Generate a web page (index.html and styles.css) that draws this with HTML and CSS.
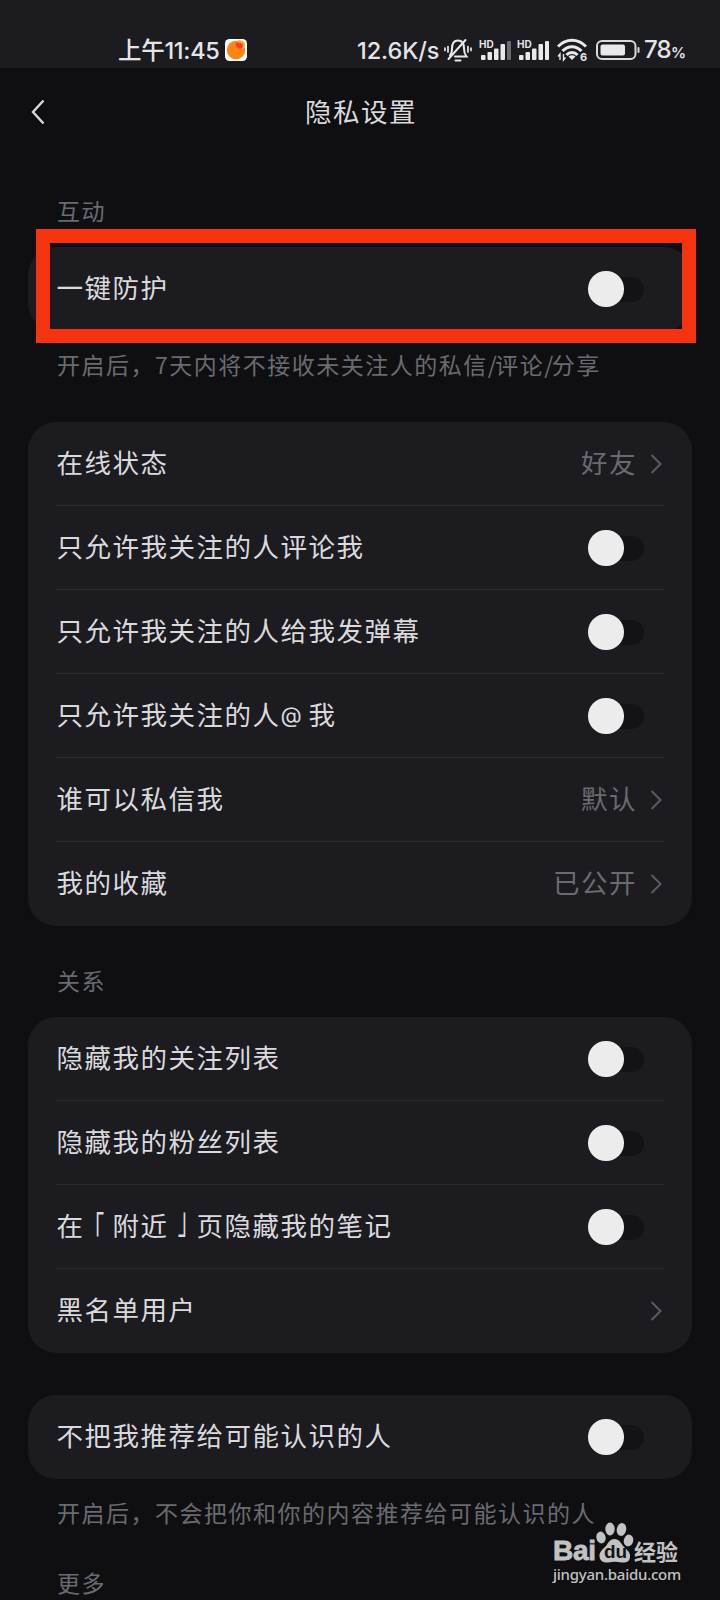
FILE: index.html
```
<!DOCTYPE html>
<html lang="zh-CN">
<head>
<meta charset="utf-8">
<title>隐私设置</title>
<link rel="stylesheet" href="styles.css">
</head>
<body>
<div class="screen">
  <header class="status">
    <span class="clock">上午11:45</span>
    <svg class="app" width="22" height="22" viewBox="0 0 22 22"><rect width="22" height="22" rx="4.5" fill="#fff"/><circle cx="11" cy="11" r="9.2" fill="#ff8412"/><path d="M11 3.2C12 .8 17 .6 19.5 3.5 21 7 18.500 10.200 15.500 10.200 12 10 10.200 6.500 11 3.200Z" fill="#ffad26"/><path d="M11 3.200A9.200 9.200 0 0 1 17.600 5C18.700 9 15.500 10.500 13.500 9.600 11 8.500 10.300 5.500 11 3.200Z" fill="#ff3b30"/></svg>
    <span class="speed">12.6K/s</span>
    <svg class="bell" width="28" height="26" viewBox="0 0 28 26" fill="none" stroke="#e9e9ec" stroke-width="2" stroke-linecap="round"><path d="M6 18.500C7.500 17 8 15.500 8 11.500 8 6.500 10 3.500 14 3.500 18 3.500 20 6.500 20 11.500 20 15.500 20.500 17 22.500 19.500H11"/><path d="M4.500 22 21.500 3"/><path d="M11.500 23.500H16.500"/><path d="M4 9.500V15M1 11V13.500M24 9.500V15M27 11V13.500" stroke-width="1.700"/></svg>
    <div class="signal"><span class="hd">HD</span><svg width="32" height="20" viewBox="0 0 32 20" fill="#e9e9ec"><rect x="2" y="15" width="4.500" height="5" rx="1"/><rect x="8.500" y="12" width="4.500" height="8" rx="1"/><rect x="15" y="8.500" width="4.500" height="11.500" rx="1"/><rect x="21.500" y="4" width="4.500" height="16" rx="1"/><rect x="28" y="1" width="4" height="19" rx="1" fill="#6b6a70"/></svg></div>
    <div class="signal second"><span class="hd">HD</span><svg width="32" height="20" viewBox="0 0 32 20" fill="#e9e9ec"><rect x="2" y="15" width="4.500" height="5" rx="1"/><rect x="8.500" y="12" width="4.500" height="8" rx="1"/><rect x="15" y="8.500" width="4.500" height="11.500" rx="1"/><rect x="21.500" y="4" width="4.500" height="16" rx="1"/><rect x="28" y="1" width="4" height="19" rx="1"/></svg></div>
    <div class="wifi"><svg width="30" height="24" viewBox="0 0 30 24" fill="none" stroke="#e9e9ec" stroke-width="3"><path d="M1 8.500C9 .2 21 .2 29 8.500"/><path d="M5.500 13C11 7.300 19 7.300 24.500 13"/><path d="M9.500 17C12.500 13.700 17.500 13.700 20.500 17"/><path d="M11.500 18.500Q15 16 18.500 18.500L15 22Z" fill="#e9e9ec" stroke="none"/><path d="M3 22V16L1 18.500M6.500 16V22L8.500 19.500" stroke-width="1.400"/></svg><span class="six">6</span></div>
    <svg class="battery" width="44" height="20" viewBox="0 0 44 20"><rect x="1" y="1" width="38.500" height="18" rx="5" fill="none" stroke="#d9d9dc" stroke-width="2"/><rect x="4.500" y="4.500" width="24.500" height="11" rx="2" fill="#e9e9ec"/><rect x="41.500" y="7" width="2" height="6" rx="1" fill="#d9d9dc"/></svg>
    <span class="percent">78<small>%</small></span>
  </header>

  <nav class="title-bar">
    <svg class="back" width="14" height="26" viewBox="0 0 14 26" fill="none" stroke="#d9d9dd" stroke-width="2.400"><path d="M12.500 1.500 2 13 12.500 24.500"/></svg>
    <h1>隐私设置</h1>
  </nav>

  <main class="content">
    <h2 class="section first">互动</h2>
    <section class="card">
      <div class="row"><span class="label">一键防护</span><i class="toggle"></i></div>
      <div class="highlight"></div>
    </section>
    <p class="note">开启后，7天内将不接收未关注人的私信<span class="slash">/</span>评论<span class="slash">/</span>分享</p>

    <section class="card general">
      <div class="row"><span class="label">在线状态</span><span class="value">好友</span><svg class="chevron" viewBox="0 0 12 20"><path d="M1.500 1 10.500 10 1.500 19"/></svg></div>
      <div class="row"><span class="label">只允许我关注的人评论我</span><i class="toggle"></i></div>
      <div class="row"><span class="label">只允许我关注的人给我发弹幕</span><i class="toggle"></i></div>
      <div class="row"><span class="label">只允许我关注的人<span class="at">@</span>我</span><i class="toggle"></i></div>
      <div class="row"><span class="label">谁可以私信我</span><span class="value">默认</span><svg class="chevron" viewBox="0 0 12 20"><path d="M1.500 1 10.500 10 1.500 19"/></svg></div>
      <div class="row"><span class="label">我的收藏</span><span class="value">已公开</span><svg class="chevron" viewBox="0 0 12 20"><path d="M1.500 1 10.500 10 1.500 19"/></svg></div>
    </section>

    <h2 class="section">关系</h2>
    <section class="card">
      <div class="row"><span class="label">隐藏我的关注列表</span><i class="toggle"></i></div>
      <div class="row"><span class="label">隐藏我的粉丝列表</span><i class="toggle"></i></div>
      <div class="row"><span class="label">在<span class="quote open">「</span>附近<span class="quote close">」</span>页隐藏我的笔记</span><i class="toggle"></i></div>
      <div class="row"><span class="label">黑名单用户</span><svg class="chevron" viewBox="0 0 12 20"><path d="M1.500 1 10.500 10 1.500 19"/></svg></div>
    </section>

    <section class="card recommend">
      <div class="row"><span class="label">不把我推荐给可能认识的人</span><i class="toggle"></i></div>
    </section>
    <p class="note last">开启后，不会把你和你的内容推荐给可能认识的人</p>
    <h2 class="section more">更多</h2>
  </main>

  <div class="watermark">
    <div class="brand">
      <span class="bai">Bai</span>
      <span class="paw"><svg width="38" height="42" viewBox="0 0 38 42" fill="#c2c2c4"><ellipse cx="5" cy="15.500" rx="4.600" ry="6" transform="rotate(-12 5 15.500)"/><ellipse cx="14" cy="7" rx="4.700" ry="6.500"/><ellipse cx="25.500" cy="7.500" rx="4.700" ry="6.500" transform="rotate(12 25.500 7.500)"/><ellipse cx="32.500" cy="18.500" rx="4.700" ry="6" transform="rotate(12 32.500 18.500)"/><path d="M18.500 17C23.500 17 24.500 21 28 25 32 28.500 34.500 31 34 35 33.500 40 29.500 41 25.500 40.500Q19 39 12.500 40.500C8 41 4 39.500 3.500 34.500 3 30 6.500 27.500 9.500 24.500 12.500 21 13.500 17 18.500 17Z"/></svg><span class="du">du</span></span>
      <span class="jing">经验</span>
    </div>
    <div class="site">jingyan.baidu.com</div>
  </div>
</div>
</body>
</html>
```
FILE: styles.css
```
* { box-sizing: border-box; }
body { margin: 0; background: #0f0f11; }
.screen {
  position: relative;
  width: 720px;
  height: 1600px;
  overflow: hidden;
  color: #d9d9de;
  font-family: "Noto Sans CJK SC", sans-serif;
  font-weight: 400;
}
.status {
  display: flex;
  align-items: center;
  height: 68px;
  padding: 32px 0 0 118px;
  background: #1b1b20;
  color: #e4e4e8;
  font-size: 23.5px;
  font-weight: 450;
  line-height: 36px;
  white-space: nowrap;
}
.clock { width: 107px; font-family: "Inter", "Noto Sans CJK SC", sans-serif; letter-spacing: -.3px; }
.app { flex: none; }
.speed { width: 87px; margin-left: 110px; font-family: "Inter", sans-serif; letter-spacing: -.1px; }
.clock, .speed { padding-top: 1px; }
.bell { flex: none; }
.signal { position: relative; display: flex; flex: none; width: 32px; margin-left: 7px; }
.second { margin-left: 6px; }
.hd { position: absolute; left: 0; top: -1px; font: 700 10px/10px "Inter", sans-serif; background: #1b1b20; }
.wifi { position: relative; display: flex; margin-left: 8px; }
.six { position: absolute; left: 23px; top: 14px; font: 700 11px/11px "Inter", sans-serif; background: #1b1b20; }
.battery { flex: none; margin-left: 9px; }
.percent { margin-left: 4px; padding-top: 2px; font-family: "Inter", sans-serif; font-size: 24px; letter-spacing: -.8px; }
.percent small { font-size: 15px; font-weight: 600; }
.title-bar { display: flex; align-items: center; height: 88px; padding-left: 31px; }
.back { flex: none; }
h1, h2, p { margin: 0; font-weight: inherit; }
h1 { margin-left: 260px; padding-bottom: 3px; font-size: 26.5px; line-height: 40px; letter-spacing: 1.5px; }
.content { padding: 0 28px; }
.section, .note {
  padding-left: 29px;
  color: #6a6b71;
  font-size: 23px;
  line-height: 36px;
  letter-spacing: 1.5px;
  white-space: nowrap;
}
.section { margin-top: 36px; margin-bottom: 19px; }
.first { margin-top: 36px; margin-bottom: 19px; }
.note { margin-top: 15px; }
.slash { letter-spacing: -1.5px; }
.card { position: relative; border-radius: 28px; background: #1b1b20; padding: 0 28px; }
.general { margin-top: 40px; }
.recommend { margin-top: 42px; }
.last { margin-top: 15px; }
.more { margin-top: 34px; }
.row {
  display: flex;
  align-items: center;
  justify-content: space-between;
  height: 84px;
  padding-left: .5px;
  border-bottom: 1px solid #2b2b30;
  font-size: 26.5px;
  line-height: 40px;
  letter-spacing: 1.5px;
  white-space: nowrap;
}
.row:last-of-type { border-bottom-color: transparent; }
.label, .value { height: 40px; margin-bottom: 3px; }
.at { display: inline-block; width: 28px; height: 20px; font-family: "Inter", sans-serif; font-size: 22px; line-height: 20px; vertical-align: 2px; }
/* Tall, half-width corner brackets centred in a full-width cell */
.quote { display: inline-block; width: 28px; height: 40px; vertical-align: top; text-align: center; letter-spacing: 0; font-feature-settings: "halt"; }
.open { transform: scale(.8, 1.4); transform-origin: 50% 26%; }
.close { transform: scale(.8, 1.4); transform-origin: 50% 90%; }
.value { margin-left: auto; color: #6a6b71; }
.chevron { width: 12px; height: 20px; margin: 0 2px 0 13px; fill: none; stroke: #5b5b61; stroke-width: 2; }
.toggle {
  position: relative;
  width: 54px;
  height: 25px;
  margin-right: 20px;
  margin-top: 1px;
  border-radius: 13px;
  background: #131317;
}
.toggle::before {
  content: "";
  position: absolute;
  left: -2px;
  top: -5.5px;
  width: 35.5px;
  height: 35.5px;
  border-radius: 50%;
  background: #ececec;
}
.highlight { position: absolute; left: 7.5px; top: -18px; width: 660.5px; height: 114px; border: 14px solid #f6330f; }
.watermark { position: absolute; left: 553px; top: 1523px; width: 140px; color: #c2c2c4; }
.brand { display: flex; align-items: flex-end; height: 41px; }
.bai { width: 43px; font: 700 28px/26px "Liberation Sans", sans-serif; letter-spacing: -.3px; -webkit-text-stroke: .8px #c2c2c4; }
.paw { position: relative; display: flex; width: 38px; height: 42px; flex: none; }
.du { position: absolute; left: 8px; top: 20px; color: #151517; font: 700 19px/19px "Liberation Sans", sans-serif; }
.jing { font-size: 22px; line-height: 28px; font-weight: 700; white-space: nowrap; }
.site { font: 500 15px/20px "Noto Sans", sans-serif; letter-spacing: -.25px; }
```
